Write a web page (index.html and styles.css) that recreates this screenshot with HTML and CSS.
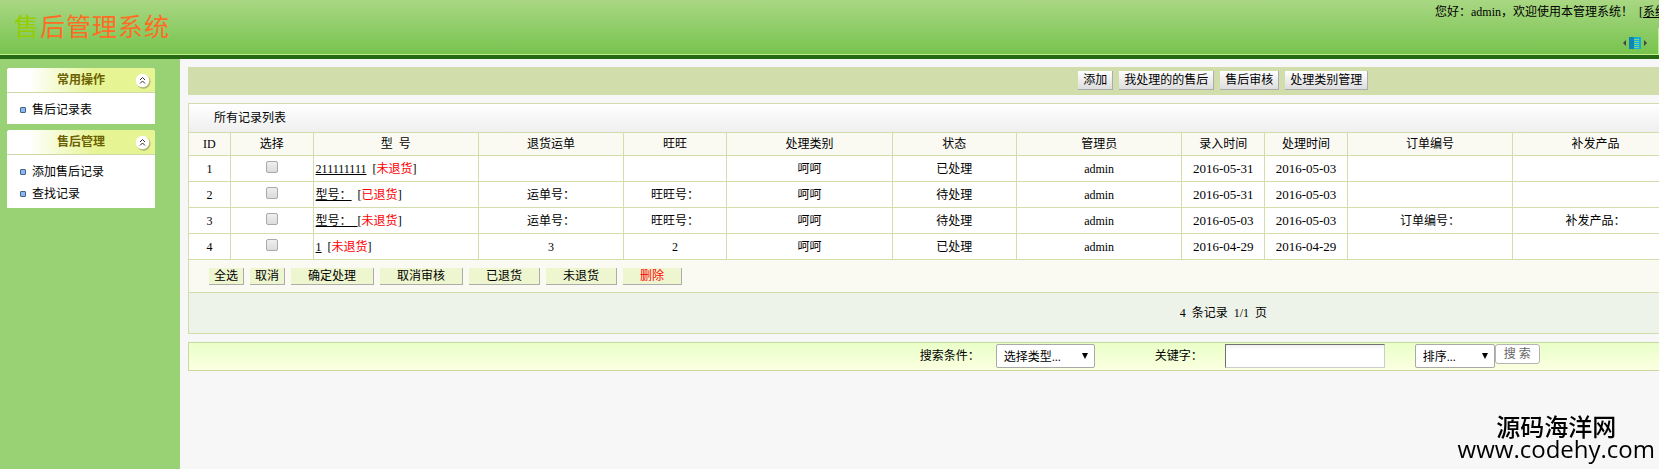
FILE: index.html
```html
<!DOCTYPE html>
<html lang="zh-CN">
<head>
  <meta charset="UTF-8">
  <meta name="viewport" content="width=device-width, initial-scale=1.0">
  <title>售后管理系统</title>
  <link rel="stylesheet" href="styles.css">
</head>
<body>
  <header class="header">
    <h1 class="logo"><span>售</span>后管理系统</h1>
    <p class="welcome">您好：admin，欢迎使用本管理系统！&nbsp; [<a href="#">系统首页</a>]</p>
    <button class="switch" type="button" aria-label="切换菜单">
      <svg width="26" height="14" viewBox="0 0 26 14">
        <path d="M4 4v6L1 7zM22 4v6l3-3z" fill="#444"/>
        <path d="M7 1h5v12H7z" fill="#0e86b4"/>
        <path d="M12 1h7v12h-7z" fill="#12b0d8"/>
        <path d="M12 3.500h5M12 5.500h5M12 7.500h5M12 9.500h5M12 11.500h5" stroke="#7fd08a"/>
      </svg>
    </button>
  </header>

  <div class="layout">
    <aside class="sidebar">
      <section class="menu">
        <h2 class="menu-title">常用操作
          <button class="toggle" type="button" aria-label="收起">
            <svg width="16" height="16" viewBox="0 0 16 16"><circle cx="8.500" cy="8.800" r="7" fill="#8c8c60" opacity=".6"/><circle cx="7.500" cy="7.500" r="6.800" fill="#fff"/><path d="M5 7l2.500-2.500L10 7M5 10.500L7.500 8l2.500 2.500" fill="none" stroke="#333"/></svg>
          </button>
        </h2>
        <ul>
          <li><a href="#">售后记录表</a></li>
        </ul>
      </section>
      <section class="menu">
        <h2 class="menu-title">售后管理
          <button class="toggle" type="button" aria-label="收起">
            <svg width="16" height="16" viewBox="0 0 16 16"><circle cx="8.500" cy="8.800" r="7" fill="#8c8c60" opacity=".6"/><circle cx="7.500" cy="7.500" r="6.800" fill="#fff"/><path d="M5 7l2.500-2.500L10 7M5 10.500L7.500 8l2.500 2.500" fill="none" stroke="#333"/></svg>
          </button>
        </h2>
        <ul>
          <li><a href="#">添加售后记录</a></li>
          <li><a href="#">查找记录</a></li>
        </ul>
      </section>
    </aside>

    <main class="content">
      <div class="page">
        <div class="toolbar">
          <button type="button">添加</button>
          <button type="button">我处理的的售后</button>
          <button type="button">售后审核</button>
          <button type="button">处理类别管理</button>
        </div>

        <div class="panel">
          <h2 class="panel-title">所有记录列表</h2>
          <table class="list">
            <colgroup>
              <col class="w2"><col class="w4"><col class="w8"><col class="w7"><col class="w5"><col class="w8"><col class="w6"><col class="w8"><col class="w4"><col class="w4"><col class="w8"><col class="w8"><col>
            </colgroup>
            <thead>
              <tr><th>ID</th><th>选择</th><th>型&nbsp; 号</th><th>退货运单</th><th>旺旺</th><th>处理类别</th><th>状态</th><th>管理员</th><th>录入时间</th><th>处理时间</th><th>订单编号</th><th>补发产品</th><th></th></tr>
            </thead>
            <tbody>
              <tr><td>1</td><td><input type="checkbox" aria-label="选择 1"></td><td class="model"><a href="#">211111111</a>&nbsp; [<em>未退货</em>]</td><td></td><td></td><td>呵呵</td><td>已处理</td><td>admin</td><td class="date">2016-05-31</td><td class="date">2016-05-03</td><td></td><td></td><td></td></tr>
              <tr><td>2</td><td><input type="checkbox" aria-label="选择 2"></td><td class="model"><a href="#">型号：</a>&nbsp; [<em>已退货</em>]</td><td>运单号：</td><td>旺旺号：</td><td>呵呵</td><td>待处理</td><td>admin</td><td class="date">2016-05-31</td><td class="date">2016-05-03</td><td></td><td></td><td></td></tr>
              <tr><td>3</td><td><input type="checkbox" aria-label="选择 3"></td><td class="model"><a href="#">型号：&nbsp;&nbsp;</a>[<em>未退货</em>]</td><td>运单号：</td><td>旺旺号：</td><td>呵呵</td><td>待处理</td><td>admin</td><td class="date">2016-05-03</td><td class="date">2016-05-03</td><td>订单编号：</td><td>补发产品：</td><td></td></tr>
              <tr><td>4</td><td><input type="checkbox" aria-label="选择 4"></td><td class="model"><a href="#">1</a>&nbsp; [<em>未退货</em>]</td><td>3</td><td>2</td><td>呵呵</td><td>已处理</td><td>admin</td><td class="date">2016-04-29</td><td class="date">2016-04-29</td><td></td><td></td><td></td></tr>
            </tbody>
          </table>
          <div class="actions">
            <button type="button">全选</button>
            <button type="button">取消</button>
            <button class="wide" type="button">确定处理</button>
            <button class="wide" type="button">取消审核</button>
            <button class="wide" type="button">已退货</button>
            <button class="wide" type="button">未退货</button>
            <button class="wide delete" type="button">删除</button>
          </div>
          <div class="pager">4&nbsp; 条记录&nbsp; 1/1&nbsp; 页</div>
        </div>

        <form class="search">
          <label for="type">搜索条件：</label>
          <select id="type" class="type"><option>选择类型...</option></select>
          <label for="keyword">关键字：</label>
          <input id="keyword" type="text">
          <select class="order" aria-label="排序"><option>排序...</option></select>
          <button type="button">搜 索</button>
        </form>
      </div>
    </main>
  </div>

  <div class="watermark">
    <span>源码海洋网</span>
    <span>www.codehy.com</span>
  </div>
</body>
</html>
```
FILE: styles.css
```css
* {
  margin: 0;
  padding: 0;
  box-sizing: border-box;
}

body {
  display: flex;
  flex-direction: column;
  min-height: 100vh;
  overflow: hidden;
  background: #f7f7f7;
  color: #000;
  font: 12px/18px "Liberation Serif", "Noto Sans CJK SC", serif;
}

button,
input,
select {
  font: inherit;
  color: inherit;
}

a {
  color: inherit;
}

/* Header */
.header {
  position: relative;
  display: flex;
  justify-content: space-between;
  height: 59px;
  background: linear-gradient(#a9d783, #76c34e);
  border-bottom: 4px solid #266914;
  box-shadow: inset 0 -1px #c5f08c;
}

.header::after {
  content: "";
  position: absolute;
  right: 0;
  bottom: 0;
  width: 1px;
  height: 27px;
  background: #c5f08c;
}

.logo {
  padding: 10px 14px;
  color: #ff6c24;
  font-size: 25px;
  font-weight: 400;
  line-height: 36px;
  letter-spacing: 1px;
}

.logo span {
  color: #96cc00;
}

.welcome {
  width: 224px;
  padding-top: 3px;
  white-space: nowrap;
}

.switch {
  position: absolute;
  right: 11px;
  bottom: 5px;
  height: 14px;
  border: none;
  background: none;
}

.switch svg {
  display: block;
}

.layout {
  display: flex;
  flex: 1;
}

/* Sidebar */
.sidebar {
  flex: none;
  width: 180px;
  padding: 9px 25px 9px 7px;
  background: #99d175;
}

.menu {
  margin-bottom: 6px;
  background: #fff;
  border-radius: 3px 3px 0 0;
}

.menu-title {
  position: relative;
  height: 25px;
  border-bottom: 1px solid #ced9a8;
  border-radius: 3px 3px 0 0;
  background: linear-gradient(to right, #fff 15%, #e6f493 60%);
  color: #6b6100;
  font-size: 12px;
  line-height: 25px;
  text-align: center;
}

.toggle {
  position: absolute;
  top: 5px;
  right: 4px;
  height: 16px;
  border: none;
  background: none;
}

.toggle svg {
  display: block;
}

.menu ul {
  padding: 6px 13px 3px;
  list-style: none;
}

.menu li {
  display: flex;
  align-items: center;
  gap: 6px;
  line-height: 22px;
}

.menu li::before {
  content: "";
  width: 4px;
  height: 4px;
  border: 1px solid #4b6384;
  border-radius: 1px;
  background: #85b8f5;
}

.menu li a {
  text-decoration: none;
}

/* Content: the list is wider than the window */
.content {
  flex: 1;
  min-width: 0;
  overflow: hidden;
}

.page {
  width: 140%;
  margin: 8px;
}

.toolbar {
  display: flex;
  justify-content: center;
  gap: 6px;
  height: 28px;
  padding: 4px;
  background: #d1deac;
}

.toolbar button {
  height: 19px;
  padding: 0 5px;
  border: 0 solid #acacac;
  border-width: 0 1px 1px 0;
  background: linear-gradient(#fff, #ddd);
}

.panel {
  margin: 8px 0;
  border: 1px solid #d1deac;
  background: #fafaf3;
}

.panel-title {
  padding: 5px 25px;
  background: linear-gradient(#fff, #efefef);
  font-size: 12px;
  font-weight: 400;
}

.list {
  width: 100%;
  table-layout: fixed;
  border-collapse: collapse;
}

.w2 { width: 2%; }
.w4 { width: 4%; }
.w5 { width: 5%; }
.w6 { width: 6%; }
.w7 { width: 7%; }
.w8 { width: 8%; }

.list th,
.list td {
  height: 26px;
  border: 1px solid #d1deac;
  font-weight: 400;
  text-align: center;
  white-space: nowrap;
}

.list th {
  height: 23px;
}

.list th:first-child,
.list td:first-child {
  border-left: none;
}

.list th:last-child,
.list td:last-child {
  border-right: none;
}

.list td {
  background: #fff;
}

.list .model {
  padding-left: 2px;
  text-align: left;
}

.list em {
  color: #f00;
  font-style: normal;
}

.list .date {
  font-size: 13px;
}

.list input {
  display: block;
  width: 12px;
  height: 12px;
  margin: 0 auto 3px;
  appearance: none;
  border: 1px solid #aaa;
  border-radius: 2px;
  background: linear-gradient(#eee, #dcdcdc);
}

.actions {
  display: flex;
  gap: 6px;
  padding: 8px 20px 7px;
}

.actions button {
  height: 17px;
  padding: 0 5px;
  border: 0 solid #acacac;
  border-width: 0 1px 1px 0;
  background: #eef6d0;
  line-height: 16px;
}

.actions .wide {
  padding: 0 17px;
}

.actions .delete {
  color: #f00;
}

.pager {
  padding: 11px;
  border-top: 1px solid #d1deac;
  background: #eef3e9;
  text-align: center;
}

/* Search */
.search {
  display: flex;
  justify-content: center;
  height: 29px;
  padding: 1px 1px 1px 14px;
  border: 1px solid #c9d9a2;
  background: linear-gradient(#e9ffc8, #fbffe0);
  line-height: 25px;
}

.search select {
  height: 24px;
  padding: 0 7px;
  appearance: none;
  border: 1px solid #a9a9a9;
  border-radius: 2px;
  background: #fff url("data:image/svg+xml,%3Csvg xmlns='http://www.w3.org/2000/svg' width='6' height='6'%3E%3Cpath d='M0 0h6L3 6z'/%3E%3C/svg%3E") no-repeat right 6px center;
}

.search .type {
  width: 99px;
  margin: 0 60px 0 16px;
}

.search input {
  width: 160px;
  height: 24px;
  margin: 0 30px 0 22px;
  padding: 0 4px;
  border: 1px solid;
  border-color: #707070 #ccc #ccc #707070;
  background: linear-gradient(#f2f2f2, #fff 5px);
}

.search .order {
  width: 80px;
}

.search button {
  width: 45px;
  height: 20px;
  border: 1px solid #b4b4b4;
  border-radius: 3px;
  background: #fff;
  color: #666;
  line-height: 18px;
}

/* Site mark over the page */
.watermark {
  position: fixed;
  right: 4px;
  bottom: 9px;
  display: flex;
  flex-direction: column;
  align-items: center;
  font: 500 24px/22px "Open Sans", "Noto Sans CJK SC", sans-serif;
}
```
